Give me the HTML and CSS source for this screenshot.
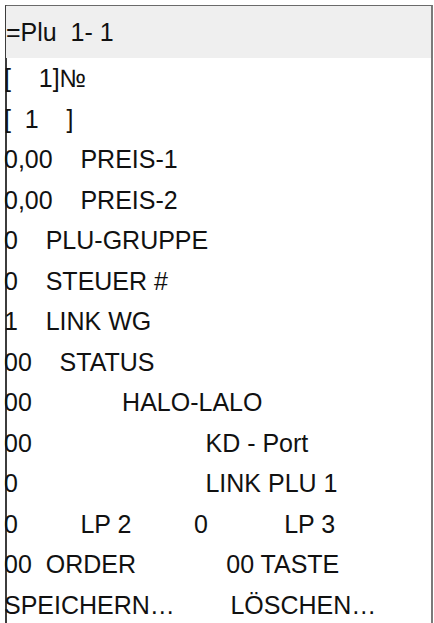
FILE: index.html
```html
<!DOCTYPE html>
<html lang="de">
<head>
  <meta charset="UTF-8">
  <meta name="viewport" content="width=device-width, initial-scale=1.0">
  <title>PLU 1-1</title>
  <link rel="stylesheet" href="styles.css">
</head>
<body>
  <div class="screen">
    <div class="title">=Plu  1- 1</div>

    <div class="line">[    1]№</div>
    <div class="line">[  1    ]</div>
    <div class="line">0,00    PREIS-1</div>
    <div class="line">0,00    PREIS-2</div>
    <div class="line">0    PLU-GRUPPE</div>
    <div class="line">0    STEUER #</div>
    <div class="line">1    LINK WG</div>
    <div class="line">00    STATUS</div>
    <div class="line">00             HALO-LALO</div>
    <div class="line">00                         KD - Port</div>
    <div class="line">0                           LINK PLU 1</div>
    <div class="line">0         LP 2         0           LP 3</div>
    <div class="line">00  ORDER             00 TASTE</div>
    <div class="line">SPEICHERN…        LÖSCHEN…</div>
  </div>
</body>
</html>
```

FILE: styles.css
```css
/* Reset */
* {
  margin: 0;
  padding: 0;
  box-sizing: border-box;
}

body {
  font-family: "Liberation Sans", Arial, sans-serif;
  background: #ffffff;
  color: #111111;
}

/* Display frame, open at the bottom */
.screen {
  margin: 5px 0 0 5px;
  width: 428px;
  height: 618px;
  border-top: 1px solid #6a6a6a;
  border-left: 2px solid #3c3c3c;
  border-right: 2px solid #7a7a7a;
}

.title,
.line {
  font-size: 25px;
  white-space: pre;
  margin-left: -3px;
}

.title {
  height: 52px;
  line-height: 52px;
  background: #efefef;
  margin-left: -1px;
}

.line {
  height: 40.5px;
  line-height: 40.5px;
}
```
